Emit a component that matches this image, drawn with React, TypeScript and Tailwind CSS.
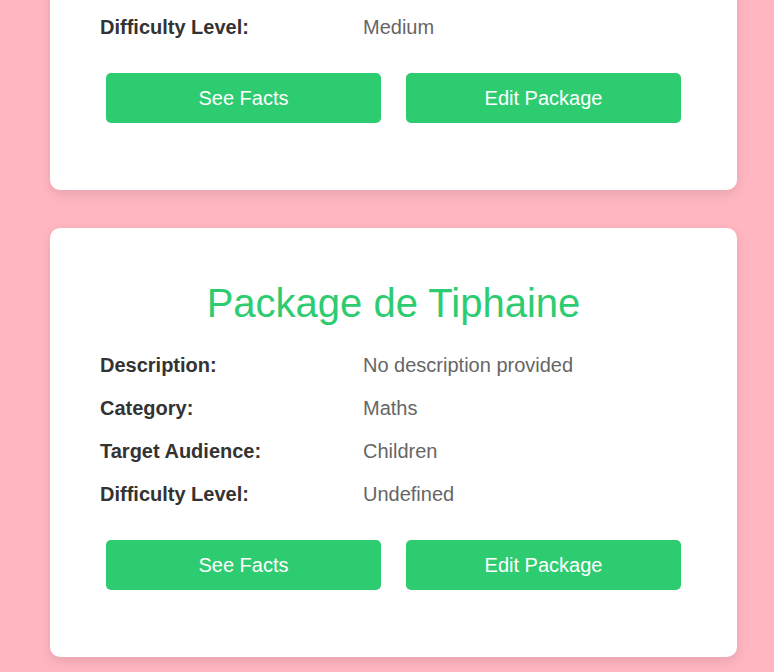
const packages = [
  {
    name: "Package de Lucas",
    description: "Facts about animals",
    category: "Science",
    audience: "Teenagers",
    difficulty: "Medium",
  },
  {
    name: "Package de Tiphaine",
    description: "No description provided",
    category: "Maths",
    audience: "Children",
    difficulty: "Undefined",
  },
];

type Pkg = (typeof packages)[number];

const Row = ({ label, value }: { label: string; value: string }) => (
  <div className="flex items-center h-[43px] leading-[23px]">
    <span className="w-[263px] shrink-0 font-bold text-[#333333]">{label}</span>
    <span className="text-[#666666]">{value}</span>
  </div>
);

const PackageCard = ({ pkg }: { pkg: Pkg }) => {
  return (
    <div className="bg-white rounded-[10px] shadow-[0_4px_12px_rgba(0,0,0,0.1)] px-[50px] pt-[52px] pb-[67px]">
      <h2 className="text-center text-[40px] leading-[46px] text-[#2ecc71] mb-[18px]">
        {pkg.name}
      </h2>

      <Row label="Description:" value={pkg.description} />
      <Row label="Category:" value={pkg.category} />
      <Row label="Target Audience:" value={pkg.audience} />
      <Row label="Difficulty Level:" value={pkg.difficulty} />

      <div className="flex justify-center gap-[25px] mt-[24px]">
        <button className="w-[275px] h-[50px] rounded-[5px] bg-[#2ecc71] text-white">
          See Facts
        </button>
        <button className="w-[275px] h-[50px] rounded-[5px] bg-[#2ecc71] text-white">
          Edit Package
        </button>
      </div>
    </div>
  );
};

export default function App() {
  return (
    <div className="h-[672px] overflow-hidden bg-[#ffb6c1] text-[20px] font-['Liberation_Sans',Arial,sans-serif]">
      {/* page is scrolled: first card partly above the fold */}
      <div className="mt-[-239px] pl-[50px] pr-[37px] flex flex-col gap-[38px]">
        {packages.map((p) => (
          <PackageCard key={p.name} pkg={p} />
        ))}
      </div>
    </div>
  );
}
